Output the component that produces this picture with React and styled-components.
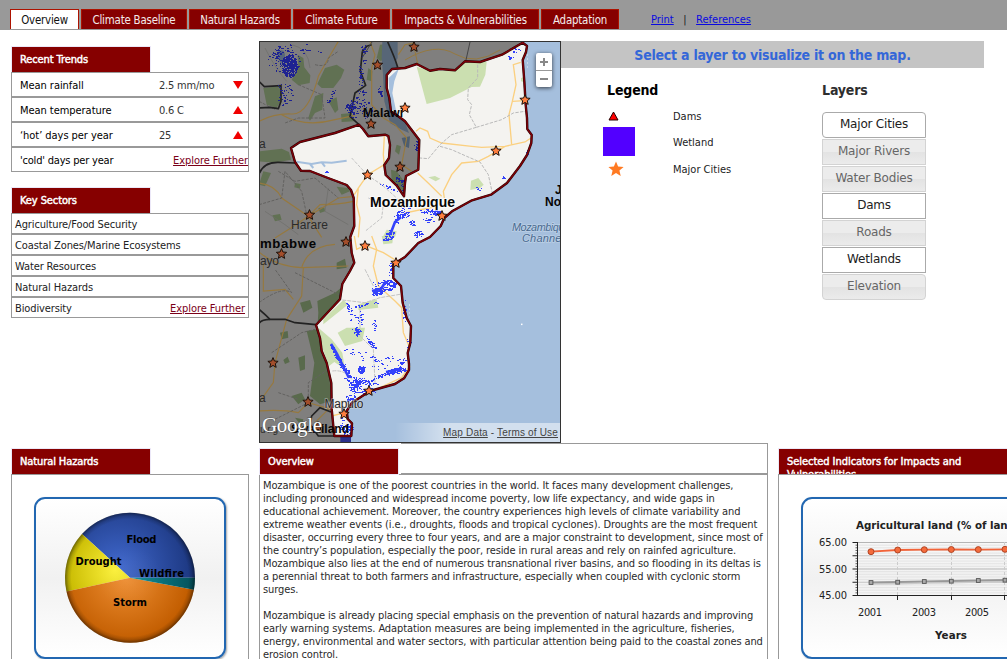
import React from 'react';
import styled, { createGlobalStyle } from 'styled-components';

const UI = '"DejaVu Sans Condensed", "DejaVu Sans", sans-serif';
const WIDE = '"DejaVu Sans", sans-serif';

const GlobalStyle = createGlobalStyle`
  * { box-sizing: border-box; }
  html, body { margin: 0; padding: 0; background: #fff; }
  body { font-family: ${UI}; font-stretch: condensed; font-size: 11px; color: #222; }
  svg { display: block; }
`;

const Page = styled.div`
  width: 1007px;
  height: 659px;
  overflow: hidden;
  background: #fff;
`;

const NavBar = styled.nav`
  display: flex;
  align-items: flex-end;
  gap: 2px;
  height: 30px;
  padding: 0 0 1px 10px;
  background: #999;
`;

const Tab = styled.a`
  display: flex;
  align-items: center;
  justify-content: center;
  width: ${(p) => p.$w}px;
  height: 20px;
  padding-top: 1px;
  border: 1px solid #ad1200;
  border-bottom: 0;
  background: ${(p) => (p.$active ? '#fff' : '#860000')};
  color: ${(p) => (p.$active ? '#111' : '#f4eaea')};
  font-size: 11.4px;
  letter-spacing: -0.2px;
  white-space: nowrap;
`;

const NavLinks = styled.div`
  display: flex;
  gap: 9.5px;
  margin-left: 30px;
  height: 20px;
  line-height: 21px;
  color: #222;
  a { color: #0a0ae0; text-decoration: underline; }
`;

const TopRow = styled.div`
  display: grid;
  grid-template-columns: 238px 312px 423px;
  height: 402px;
  margin: 11px 0 0 11px;
`;

const Sidebar = styled.div`
  padding-top: 6px;
`;

const MapColumn = styled.div`
  padding-left: 10px;
`;

const SidePanel = styled.section`
  min-width: 0;
`;

const PanelTitle = styled.h3`
  width: ${(p) => p.$w || 138}px;
  height: 25px;
  margin: 0 0 0 1px;
  padding: 6px 8px 0;
  overflow: hidden;
  background: #860000;
  box-shadow: 0 0 0 1px #ece8f8;
  color: #fff;
  font-size: 11px;
  font-weight: normal;
  line-height: 13px;
  letter-spacing: ${(p) => p.$ls ?? -0.1}px;
  -webkit-text-stroke: 0.45px #fff;
`;

const Rows = styled.div`
  position: relative;
  margin-bottom: ${(p) => p.$gap || 0}px;
  background: #fff;
`;

const Row = styled.div`
  display: flex;
  align-items: center;
  width: 238px;
  height: ${(p) => p.$h}px;
  padding: 2px ${(p) => p.$right || 0}px 0 ${(p) => p.$pad}px;
  border: 1px solid #999;
  color: ${(p) => p.$color || '#222'};
  white-space: nowrap;
  overflow: hidden;
  letter-spacing: ${(p) => p.$ls ?? -0.05}px;
`;

const RowLabel = styled.span`
  width: ${(p) => (p.$w ? p.$w + 'px' : 'auto')};
`;

const RowValue = styled.span`
  flex: 1;
  color: #333;
  letter-spacing: -0.2px;
`;

const Arrow = styled.span`
  width: 0;
  height: 0;
  margin: 0 5px 2px 0;
  border-left: 5.5px solid transparent;
  border-right: 5.5px solid transparent;
  border-top: ${(p) => (p.$down ? '8px solid #f00000' : '0')};
  border-bottom: ${(p) => (p.$down ? '0' : '8px solid #f00000')};
`;

const Explore = styled.a`
  margin-left: auto;
  color: #7b0018;
  text-decoration: underline;
  letter-spacing: -0.07px;
`;

const MapFrame = styled.div`
  position: relative;
  width: 302px;
  height: 402px;
  border: 1px solid #333;
  overflow: hidden;
`;

const ZoomControl = styled.div`
  position: absolute;
  top: 11px;
  left: 276px;
  width: 16px;
  border-radius: 2px;
  background: #fff;
  box-shadow: 0 1px 4px rgba(0, 0, 0, 0.7);
`;

const ZoomButton = styled.div`
  display: flex;
  align-items: center;
  justify-content: center;
  height: 17px;
  & + & { border-top: 1px solid #999; }
`;

const MapFooter = styled.div`
  position: absolute;
  right: 0;
  bottom: 0;
  width: 165px;
  height: 19px;
  padding-right: 2px;
  line-height: 20px;
  text-align: right;
  font-family: "Liberation Sans", sans-serif;
  font-size: 10px;
  letter-spacing: 0.17px;
  color: #444;
  background: linear-gradient(90deg, rgba(255, 255, 255, 0), rgba(255, 255, 255, 0.5) 50px);
  u { text-underline-offset: 1px; }
`;

const Banner = styled.div`
  height: 27px;
  line-height: 28px;
  text-align: center;
  background: #c4c4c4;
  color: #3467d8;
  font-size: 14px;
  font-weight: bold;
  letter-spacing: -0.24px;
  white-space: nowrap;
`;

const Controls = styled.div`
  display: grid;
  grid-template-columns: 219px 104px;
  padding: 12px 0 0 42px;
`;

const Heading = styled.h2`
  margin: 0 0 ${(p) => p.$mb}px ${(p) => p.$ml || 0}px;
  height: 20px;
  line-height: 20px;
  font-size: 14px;
  letter-spacing: -0.15px;
  color: ${(p) => p.$color};
`;

const LegendRow = styled.div`
  display: grid;
  grid-template-columns: 26px 1fr;
  column-gap: 44px;
  align-items: center;
  height: ${(p) => p.$h}px;
  span { padding-top: 2px; }
`;

const LegendIcon = styled.div`
  display: flex;
  justify-content: center;
  width: ${(p) => p.$w || 26}px;
`;

const Swatch = styled.div`
  flex: none;
  width: 32px;
  height: 29px;
  margin-left: 6px;
  background: #5200ff;
`;

const LayerButton = styled.button`
  display: block;
  width: 104px;
  height: 26px;
  margin: 0 0 1px;
  padding: 0 0 2px;
  border: 1px solid ${(p) => (p.$on ? '#aaa' : '#d3d3d3')};
  border-radius: ${(p) => p.$radius || '0'};
  background: ${(p) => (p.$on ? '#fff' : 'linear-gradient(#ececec 48%, #e3e3e3 52%, #ebebeb)')};
  color: ${(p) => (p.$on ? '#212121' : '#666')};
  font-family: ${WIDE};
  font-stretch: normal;
  font-size: 12px;
  letter-spacing: -0.2px;
`;

const BottomRow = styled.div`
  display: grid;
  grid-template-columns: 238px 509px 300px;
  column-gap: 10px;
  margin-left: 11px;
`;

const Panel = styled.section`
  padding-top: 6px;
`;

const ChartBox = styled.div`
  height: 230px;
  padding: 22px 22px 0;
  border: 1px solid #999;
`;

const ChartCard = styled.div`
  width: ${(p) => p.$w}px;
  height: 162px;
  border: 2px solid #2267b1;
  border-radius: 11px;
  overflow: hidden;
  background: linear-gradient(#fff, #f1f1f1 50%, #fff);
  box-shadow: 1px 1px 2px rgba(0, 0, 0, 0.35);
`;

const ChartLabels = styled.g`
  font-family: ${WIDE};
  font-stretch: normal;
  font-weight: bold;
  font-size: ${(p) => p.$size}px;
  fill: ${(p) => p.$color};
`;

const OverviewHead = styled.div`
  display: grid;
  grid-template-columns: 142px 1fr;
  height: 31px;
`;

const OverviewTitle = styled.div`
  padding-top: 6px;
`;

const EmptyCell = styled.div`
  border: 1px solid #999;
  border-left: 0;
`;

const OverviewText = styled.div`
  height: 230px;
  padding: 4px 0 0 3px;
  border: 1px solid #999;
  color: #2a2a2a;
`;

const Paragraph = styled.p`
  margin: 0 0 13px;
`;

const Line = styled.span`
  display: block;
  height: 13px;
  line-height: 13px;
  white-space: nowrap;
  letter-spacing: -0.11px;
`;

const scatter = (clusters) => {
  let seed = 7;
  const rnd = () => {
    seed = (seed * 16807) % 2147483647;
    return seed / 2147483647;
  };
  let d = '';
  clusters.forEach(([cx, cy, rx, ry, n, deg = 0]) => {
    const a = (deg * Math.PI) / 180;
    for (let i = 0; i < n * 1.35; i += 1) {
      const t = rnd() * Math.PI * 2;
      const r = Math.pow(rnd(), 0.7);
      const u = Math.cos(t) * r * rx;
      const v = Math.sin(t) * r * ry;
      const x = Math.round(cx + u * Math.cos(a) - v * Math.sin(a));
      const y = Math.round(cy + u * Math.sin(a) + v * Math.cos(a));
      const w = rnd() > 0.6 ? 2 : 1;
      d += `M${x} ${y}h${w}v1h${-w}z`;
    }
  });
  return d;
};

const DARK_WET = scatter([
  [289, 66, 8, 11, 260], [284, 60, 16, 16, 60], [300, 50, 26, 8, 16], [283, 94, 9, 13, 30],
  [277, 53, 6, 8, 20], [331, 96, 2, 9, 12, 25], [363, 54, 3, 11, 14], [360, 77, 3, 11, 18],
  [359, 108, 14, 12, 55], [350, 107, 5, 4, 30], [362, 92, 5, 4, 10], [380, 92, 3, 6, 12],
  [416, 146, 2, 7, 10], [398, 179, 3, 5, 14], [402, 185, 2, 6, 10],
]);

const LIGHT_WET = scatter([
  [515, 50, 5, 3, 8], [511, 57, 4, 3, 6], [527, 152, 1, 3, 4], [503, 177, 2, 3, 4],
  [402, 214, 7, 4, 50], [396, 220, 3, 6, 14], [389, 235, 4, 6, 26, 35], [412, 223, 4, 3, 20], [418, 234, 5, 3, 22],
  [388, 187, 10, 1.5, 14, 20], [429, 211, 10, 3, 26], [437, 213, 4, 3, 24], [428, 220, 6, 3, 12],
  [404, 206, 6, 5, 12, 50], [478, 189, 5, 2, 4], [386, 239, 4, 2, 12],
  [379, 291, 8, 3.5, 90, -28], [386, 282, 6, 3, 34], [376, 285, 5, 5, 8], [391, 286, 3, 6, 26, 50],
  [390, 270, 2, 7, 10], [366, 304, 14, 1.5, 16, -12], [349, 309, 2, 7, 14, -20], [360, 318, 3, 8, 12],
  [357, 332, 3, 4.5, 34], [353, 324, 4, 10, 6], [371, 343, 2, 9, 26, -35], [374, 325, 2, 8, 10],
  [337, 357, 2, 15, 60, -28], [345, 369, 3, 9, 30, -35], [352, 352, 9, 3, 8, 15], [361, 369, 3.5, 4.5, 60],
  [361, 381, 18, 4, 60, 8], [355, 386, 7, 7, 70], [368, 391, 8, 3, 24], [351, 398, 6, 4, 24],
  [388, 373, 18, 2, 60, -18], [397, 370, 9, 3, 70, -8], [402, 362, 7, 1.5, 12, -45], [393, 358, 9, 3, 5],
  [374, 360, 16, 8, 12, 18], [404, 311, 2, 12, 14], [408, 343, 2, 7, 7], [382, 363, 12, 8, 8],
  [347, 429, 5, 7, 40], [342, 425, 2, 8, 12], [326, 172, 2, 1, 3],
]);

const MOZ =
  'M522.7 42.7L527 46L526 52L522.7 60L524.3 81L525.7 105L527 118L527.3 129L531.7 135L531.3 143L527 155L520 166L507 183L491 194.7L472 200.3L452 211.3L444.3 218L440.7 226L430 237L418.3 243L405 257L393.3 264.3L393.3 278L401 286L402.7 303L406.7 318L411 326L410.3 343L407.7 353L409 364L409 370L404 378.3L395 384L370 391L352 402.7L346.7 411L347.7 419L352 423.3L351.3 436L334.3 436L331.7 409L331.3 383L326.7 363L321.7 351L320 338L316 325L340 299.3L342.3 284L350 271L354.3 262.7L351.7 253L350.3 237L354.3 226L353.7 198L351 190L346.7 185L328 178L310 171L301 170.7L295 162L291 148L300 142L335 133L359 124.7L363 129L368.3 136.3L385 134.7L388.3 136L390 145L389 158L384.3 165L385.7 175L397 186L404 196.3L405 183L406 176L418.3 169.7L419.3 140L405 121.3L401.7 118.7L391 111.3L389.3 98L386.7 88L386.7 75L392 69L405 68L416.7 64L430 70.7L440 69L455 70.3L465 61.3L480 62L502 54.7Z';

const star = (cx, cy, r) =>
  Array.from({ length: 10 }, (_, i) => {
    const a = (Math.PI / 5) * i - Math.PI / 2;
    const k = i % 2 ? r * 0.45 : r;
    return `${(cx + Math.cos(a) * k).toFixed(2)},${(cy + Math.sin(a) * k).toFixed(2)}`;
  }).join(' ');

const CITIES = [
  [414, 47, 1], [377.5, 65, 1], [405, 108, 0], [371, 124, 1], [525, 100, 0], [496, 151, 0], [400, 167, 1],
  [367.5, 175, 0], [309.5, 215, 1], [442, 216, 0], [346, 242, 1], [365, 246, 0], [281.5, 254, 1],
  [396, 263, 0], [273, 363, 1], [308, 402, 1], [369, 391, 0], [344, 414, 0], [318, 427, 1],
];

const A = '"Liberation Sans", sans-serif';

const CountryMap = () => (
  <svg width="300" height="400" viewBox="260 42 300 400">
    <rect x="260" y="42" width="300" height="400" fill="#a5bfdd" />
    <path d="M260 42H523L440 95L425 190L380 262L380 350L345 412L350 425L351 442H260Z" fill="#807f7e" />

    <g transform="translate(255 38) scale(.33333)">
      <g fill="#617153">
        <path d="M128 50L145 60L148 88L166 112L164 135L130 142L110 125L130 85Z" />
        <path d="M25 150L75 145L80 185L65 210L35 200Z" />
        <path d="M210 90L245 80L268 95L258 120L235 150L200 150L187 138Z" />
        <path d="M180 175L205 165L202 215L180 225L165 248L160 240Z" />
        <path d="M220 190L245 178L250 215L240 225Z" />
        <path d="M258 228L290 225L298 250L260 252Z" />
        <path d="M12 340L80 332L102 342L108 365L60 374L12 370Z" />
        <path d="M25 400L48 405L30 445L12 440Z" />
        <path d="M120 435L137 438L135 452L118 448Z" />
        <path d="M245 446L278 450L285 460L260 470Z" />
        <path d="M340 90L352 100L350 130L335 125Z" />
        <path d="M375 20L398 18L395 50L378 70L365 60Z" />
        <path d="M425 320L438 325L432 350L420 340Z" />
        <path d="M408 395L425 400L455 440L445 460L410 430Z" />
        <path d="M52 532L75 528L80 545L60 550Z" />
        <path d="M190 510L208 508L210 520L195 525Z" />
      </g>
      <path d="M382 12H428V60L422 72L428 90L404 110L399 150L405 190L412 222L448 248L462 285L440 275L405 255L388 190L384 110L380 60Z" fill="#576677" />
      <path d="M440 300L465 295L462 330L448 325Z" fill="#4c5d70" />
      <path d="M70 40Q90 30 90 55L78 78Q66 60 70 40Z" fill="#56667b" />
      <g fill="none" stroke="#96793f" strokeWidth="3.5">
        <path d="M12 250Q60 225 110 228T190 115L215 70L250 10" />
        <path d="M80 230Q150 270 240 245L300 232" />
        <path d="M12 435Q60 440 80 480L160 535L250 480L298 475" />
        <path d="M60 600Q110 570 160 535L195 500Q250 500 295 490M160 535L200 598" />
        <path d="M345 12L360 50L350 90L350 200L385 240L420 260L455 300L440 380L470 400" />
        <path d="M430 50L450 20L475 15" />
      </g>
      <g fill="none" stroke="#62615f" strokeWidth="3" strokeDasharray="9 4">
        <path d="M180 80Q220 90 220 60L250 40M130 140L200 170L210 240L130 240L90 255M12 190L60 215" />
        <path d="M12 500L80 480L90 400L140 460L155 530M70 400L120 430L180 420L250 480" />
      </g>
      <g fill="none" stroke="#6c6c6a" strokeWidth="2">
        <path d="M30 30Q60 90 95 130M110 20Q160 30 165 90M180 360L170 400M220 450L210 520L280 560M30 520L90 560L130 590" />
      </g>
      <g fill="none" stroke="#222" strokeWidth="5" strokeLinejoin="round">
        <path d="M12 130L28 146L78 143L78 190L70 212L45 208L12 210" />
        <path d="M12 408Q25 372 70 373L122 375" />
        <path d="M322 40L316 100L332 142L300 165L285 235L312 260" />
        <path d="M322 40L335 25L350 20M398 12Q420 60 428 88" />
      </g>
    </g>

    <g transform="translate(255 236) scale(.33333)">
      <g fill="#596a4c">
        <path d="M187 195L240 170L265 150L258 190L188 262L190 230Z" />
        <path d="M135 200L165 192L172 215L145 230Z" />
        <path d="M155 285L190 280L200 345L222 400L228 495L195 505L165 480L178 380Z" />
        <path d="M75 290L98 285L100 305L80 310ZM85 372L98 362L104 378L90 384ZM130 365L150 358L150 400L135 405Z" />
        <path d="M110 480L140 470L150 490L130 505ZM120 545L145 550L140 570ZM245 80L270 68L275 95L245 100Z" />
      </g>
      <g fill="none" stroke="#96793f" strokeWidth="3.5">
        <path d="M15 50Q60 90 140 95L280 90M140 95Q160 30 240 25M145 95L140 180L95 250L60 380L55 440L12 500M25 80V165L90 160L115 190" />
        <path d="M12 525Q80 520 130 530L160 500L230 520M180 560L240 500" />
      </g>
      <g fill="none" stroke="#62615f" strokeWidth="3" strokeDasharray="9 4">
        <path d="M12 200Q80 150 110 170L60 100M120 110L260 180M50 350L140 290L180 280M60 550L160 500L160 440L220 400M70 470L130 490" />
      </g>
      <g fill="none" stroke="#222" strokeWidth="5" strokeLinejoin="round">
        <path d="M12 220Q30 235 45 250L90 250L120 260L183 266" />
        <path d="M12 262Q20 250 45 250" />
        <path d="M228 528L195 515L170 540L165 565L190 600L240 600" />
      </g>
      <path d="M256 600L288 600V618H256Z" fill="#2a2f8c" />
    </g>
    <path d="M405 60Q435 42 455 54T500 50M414 47L418 65" stroke="#96793f" fill="none" />
    <path d="M470 42L466 60M372 42L362 58" stroke="#444" fill="none" />
    <path d={DARK_WET} fill="#1e2292" />

    <path d={MOZ} fill="#f4f3f0" />

    <g transform="translate(405 38) scale(.33333)">
      <g fill="#cbdfb0">
        <path d="M35 86L78 99L150 98L182 72H245L241 110L225 146L200 147L135 180L65 198L60 180Z" />
        <path d="M198 428L220 420L236 440L225 450L196 456ZM70 418L90 414L106 422L92 430ZM348 120L357 117V132L348 130Z" />
      </g>
      <g fill="none" stroke="#fbd080" strokeWidth="4">
        <path d="M347 73L325 80L333 140L322 190L312 230L320 320" />
        <path d="M322 190L358 188M33 280L45 270L68 280L75 300L110 315L200 325L230 328L300 325L360 312L378 300" />
        <path d="M300 325L250 355L220 370L170 375L140 410L115 460L118 480M38 405L75 440L110 475M95 505L0 525" />
      </g>
      <g fill="none" stroke="#b9b9b9" strokeWidth="3" strokeDasharray="10 4">
        <path d="M218 80V120L190 150L188 185L200 200L193 230L214 268L140 290L105 320L70 362L45 360" />
        <path d="M214 268L290 245L325 225L360 220M105 325L140 335L185 355L225 372L250 410L262 465" />
      </g>
    </g>
    <g transform="translate(255 38) scale(.33333)">
      <path d="M401 120L432 91L418 130L412 165L424 222L410 215L404 190Z" fill="#a5bfdd" />
      <path d="M124 371L170 378L200 373L230 374L275 368M165 378L175 390M200 373L210 386" fill="none" stroke="#a5bfdd" strokeWidth="6" />
      <path d="M383 598L395 575L425 580L420 598Z" fill="#cbdfb0" />
      <g fill="none" stroke="#fbd080" strokeWidth="4">
        <path d="M388 295L385 350L388 380L338 410L310 450L305 500L315 540L310 598M310 450L298 470" />
      </g>
      <g fill="none" stroke="#c3c3c3" strokeWidth="3" strokeDasharray="10 4">
        <path d="M290 360L338 412L380 440L425 480L440 510M340 480L385 500L380 540L330 580" />
      </g>
    </g>
    <g transform="translate(255 236) scale(.33333)">
      <g fill="#cbdfb0">
        <path d="M205 250L265 192L280 205L205 265ZM310 205L365 190L370 215L310 222Z" />
        <path d="M248 290L275 275L330 275L322 315L270 330ZM190 275L230 310L262 350L270 400L238 378L222 390L200 330Z" />
        <path d="M380 0H415L412 22L385 25Z" />
      </g>
      <g fill="none" stroke="#fbd080" strokeWidth="4">
        <path d="M298 0L305 40L330 28L385 50L418 70M350 0L365 40L355 90L370 150L420 195L440 215L445 290L462 330M375 455L440 425L465 390M270 530L230 540" />
      </g>
      <g fill="none" stroke="#c3c3c3" strokeWidth="3" strokeDasharray="12 3">
        <path d="M262 192L330 200L375 185L435 175M315 220V300L355 340L360 440M330 100L355 150M232 405Q270 400 290 430" />
      </g>
    </g>
    <path d={LIGHT_WET} fill="#3442fb" />
    <path d="M401 217L395 222L390 235M331 344L337 354L345 370L349 378M372 291L381 289L386 281M386 372L402 369" stroke="#3442fb" strokeWidth="2.6" fill="none" />
    <path d={MOZ} fill="none" stroke="#240505" strokeWidth="2.4" strokeLinejoin="round" />
    <path d={MOZ} fill="none" stroke="#7d0008" strokeWidth="1.5" strokeLinejoin="round" />
    <rect x="521" y="323.6" width="1.5" height="1.5" fill="#fff" />
    <path d="M527.5 54v16M409.5 304v14" stroke="#c7d6e6" strokeDasharray="2 2" />

    <g fontFamily={A}>
      <g fontSize="12" fill="#2b2b2b">
        <text x="291" y="229" textLength="37">Harare</text>
        <text x="260" y="265" textLength="19">ayo</text>
        <text x="259" y="148">a</text>
        <text x="259" y="402">a</text>
        <text x="260" y="433" fontSize="10" textLength="18">urg</text>
        <text x="324.5" y="408" textLength="39" stroke="#ddd" strokeWidth="1.5" paintOrder="stroke" strokeOpacity=".5">Maputo</text>
      </g>
      <g fontWeight="bold" fill="#050505">
        <text x="363" y="117" fontSize="12" textLength="40">Malawi</text>
        <text x="260" y="248" fontSize="13.2" textLength="56">mbabwe</text>
        <text x="370" y="207" fontSize="14" textLength="85" stroke="#fff" strokeWidth="2" paintOrder="stroke" strokeOpacity=".7">Mozambique</text>
        <text x="291" y="433" fontSize="12" textLength="58">Swaziland</text>
        <text x="555" y="194" fontSize="12">J</text>
        <text x="545" y="206" fontSize="12">No</text>
      </g>
      <g fontStyle="italic" fontSize="11" fill="#48698f" stroke="#bcd0e6" strokeWidth="1.5" paintOrder="stroke">
        <text x="512" y="231" textLength="58">Mozambique</text>
        <text x="522" y="242" textLength="42">Channel</text>
      </g>
    </g>
    {CITIES.map(([x, y, dim]) => (
      <polygon key={`${x}-${y}`} points={star(x, y, 5.4)} fill={dim ? '#a34e2b' : '#ff7f3f'} stroke="#1b1009" strokeWidth="1" />
    ))}
    <text x="262" y="432" fontFamily='"Liberation Serif", serif' fontSize="21" textLength="60" fill="#fff" stroke="#555" strokeWidth="1" paintOrder="stroke">Google</text>
  </svg>
);

const PieChart = () => (
  <svg width="188" height="158" viewBox="36 499 188 158">
    <defs>
      <radialGradient id="pieShade" gradientUnits="userSpaceOnUse" cx="130" cy="577.7" r="65">
        <stop offset="0" stopColor="#fff" stopOpacity=".05" />
        <stop offset=".5" stopColor="#fff" stopOpacity="0" />
        <stop offset=".9" stopColor="#000" stopOpacity="0" />
        <stop offset=".95" stopColor="#000" stopOpacity=".15" />
        <stop offset="1" stopColor="#000" stopOpacity=".45" />
      </radialGradient>
      <radialGradient id="flood" gradientUnits="userSpaceOnUse" cx="118" cy="568" r="75">
        <stop offset="0" stopColor="#4068cd" />
        <stop offset="1" stopColor="#1c3780" />
      </radialGradient>
      <radialGradient id="storm" gradientUnits="userSpaceOnUse" cx="125" cy="577" r="65">
        <stop offset="0" stopColor="#ee8e32" />
        <stop offset="1" stopColor="#c25d00" />
      </radialGradient>
      <radialGradient id="drought" gradientUnits="userSpaceOnUse" cx="115" cy="570" r="50">
        <stop offset="0" stopColor="#fbf03a" />
        <stop offset="1" stopColor="#c7b900" />
      </radialGradient>
      <linearGradient id="wildfire" x1="0" x2="1">
        <stop offset="0" stopColor="#0d8f98" />
        <stop offset="1" stopColor="#04505a" />
      </linearGradient>
    </defs>
    <path d="M130 577.7L195 577.7A65 65 0 0 0 82 534Z" fill="url(#flood)" />
    <path d="M130 577.7L82 534A65 65 0 0 0 66.5 591.5Z" fill="url(#drought)" />
    <path d="M130 577.7L66.5 591.5A65 65 0 0 0 193.9 589.8Z" fill="url(#storm)" />
    <path d="M130 577.7L193.9 589.8A65 65 0 0 0 195 577.7Z" fill="url(#wildfire)" />
    <circle cx="130" cy="577.7" r="65" fill="url(#pieShade)" />
    <ChartLabels $size={10} $color="#000">
      <text x="126.5" y="543" textLength="30">Flood</text>
      <text x="75.5" y="565" textLength="46">Drought</text>
      <text x="139" y="577" textLength="45">Wildfire</text>
      <text x="113" y="606" textLength="34">Storm</text>
    </ChartLabels>
  </svg>
);

const YEARS = [871, 897.7, 924.3, 951.3, 978.3, 1005, 1032];
const LAND = [551.7, 550, 549.7, 549.5, 549.6, 549.3, 549];
const BASE = [582.3, 582, 581.3, 581, 580.3, 580, 580];
const GRID = Array.from({ length: 21 }, (_, i) => 542.5 + i * 2.65);

const LineChart = () => (
  <svg width="236" height="158" viewBox="803 499 236 158">
    {GRID.map((y, i) => (
      <path key={y} d={`M858 ${y}H1039`} stroke={i % 10 === 0 ? '#b5b5b5' : i % 5 === 0 ? '#c4c4c4' : '#e4e4e4'} />
    ))}
    {[897.5, 951.5, 1004.5].map((x) => (
      <g key={x}>
        <path d={`M${x} 542V595`} stroke="#ccc" strokeDasharray="3 2" />
        <path d={`M${x} 595V600`} stroke="#222" />
      </g>
    ))}
    {GRID.map((y, i) => (
      <path key={y} d={`M${i % 5 === 0 ? 852.5 : 855.5} ${y}H858`} stroke="#222" strokeWidth={i % 5 === 0 ? 1 : 0.7} />
    ))}
    <path d="M857.5 542V595.5H1039" fill="none" stroke="#222" />
    <polyline points={YEARS.map((x, i) => `${x},${BASE[i] + 1.5}`).join(' ')} fill="none" stroke="#ccc" strokeWidth="2" />
    <polyline points={YEARS.map((x, i) => `${x},${BASE[i]}`).join(' ')} fill="none" stroke="#999" strokeWidth="1.8" />
    <polyline points={YEARS.map((x, i) => `${x},${LAND[i]}`).join(' ')} fill="none" stroke="#f2643a" strokeWidth="1.8" />
    {YEARS.map((x, i) => (
      <g key={x}>
        <rect x={x - 1.9} y={BASE[i] - 1.7} width="3.8" height="3.8" fill="#aaa" stroke="#555" strokeWidth=".9" />
        <circle cx={x} cy={LAND[i]} r="3" fill="#f46b3c" stroke="#a83c1c" strokeWidth=".9" />
      </g>
    ))}
    <g fontFamily={UI} fontSize="11" fill="#222">
      <text x="819" y="546" textLength="28">65.00</text>
      <text x="819" y="573" textLength="28">55.00</text>
      <text x="819" y="599" textLength="28">45.00</text>
      <text x="858" y="616" textLength="24">2001</text>
      <text x="912" y="616" textLength="24">2003</text>
      <text x="965" y="616" textLength="24">2005</text>
    </g>
    <ChartLabels $size={10.3} $color="#222">
      <text x="856" y="529" textLength="193">Agricultural land (% of land area)</text>
      <text x="935" y="639" textLength="32">Years</text>
    </ChartLabels>
  </svg>
);

const TABS = [
  ['Overview', 69], ['Climate Baseline', 106], ['Natural Hazards', 102], ['Climate Future', 97],
  ['Impacts & Vulnerabilities', 147], ['Adaptation', 78],
];
const TRENDS = [
  ['Mean rainfall', '2.5 mm/mo', 'down'], ['Mean temperature', '0.6 C', 'up'], ['‘hot’ days per year', '25', 'up'],
];
const SECTORS = ['Agriculture/Food Security', 'Coastal Zones/Marine Ecosystems', 'Water Resources', 'Natural Hazards'];
const LAYERS = [
  ['Major Cities', 1], ['Major Rivers', 0], ['Water Bodies', 0], ['Dams', 1], ['Roads', 0], ['Wetlands', 1], ['Elevation', 0],
];
const PARAGRAPHS = [
  [
    'Mozambique is one of the poorest countries in the world. It faces many development challenges,',
    'including pronounced and widespread income poverty, low life expectancy, and wide gaps in',
    'educational achievement. Moreover, the country experiences high levels of climate variability and',
    'extreme weather events (i.e., droughts, floods and tropical cyclones). Droughts are the most frequent',
    'disaster, occurring every three to four years, and are a major constraint to development, since most of',
    'the country’s population, especially the poor, reside in rural areas and rely on rainfed agriculture.',
    'Mozambique also lies at the end of numerous transnational river basins, and so flooding in its deltas is',
    'a perennial threat to both farmers and infrastructure, especially when coupled with cyclonic storm',
    'surges.',
  ],
  [
    'Mozambique is already placing special emphasis on the prevention of natural hazards and improving',
    'early warning systems. Adaptation measures are being implemented in the agriculture, fisheries,',
    'energy, environmental and water sectors, with particular attention being paid to the coastal zones and',
    'erosion control.',
  ],
];

export default function App() {
  return (
    <Page>
      <GlobalStyle />
      <NavBar>
        {TABS.map(([label, w], i) => (
          <Tab key={label} $w={w} $active={i === 0}>{label}</Tab>
        ))}
        <NavLinks><a>Print</a><span>|</span><a>References</a></NavLinks>
      </NavBar>

      <TopRow>
        <Sidebar>
          <PanelTitle>Recent Trends</PanelTitle>
          <Rows $gap={16}>
            {TRENDS.map(([label, value, dir]) => (
              <Row key={label} $h={25} $pad={8} $color="#000">
                <RowLabel $w={139}>{label}</RowLabel>
                <RowValue>{value}</RowValue>
                <Arrow $down={dir === 'down'} />
              </Row>
            ))}
            <Row $h={25} $pad={8} $color="#000" $ls={-0.2}>
              <RowLabel>'cold' days per year</RowLabel>
              <Explore>Explore Further</Explore>
            </Row>
          </Rows>
          <PanelTitle>Key Sectors</PanelTitle>
          <Rows>
            {SECTORS.map((s) => <Row key={s} $h={21} $pad={3} $ls={-0.12}>{s}</Row>)}
            <Row $h={21} $pad={3} $right={3} $ls={-0.12}>
              <RowLabel>Biodiversity</RowLabel>
              <Explore>Explore Further</Explore>
            </Row>
          </Rows>
        </Sidebar>

        <MapColumn>
          <MapFrame>
            <CountryMap />
            <ZoomControl>
              <ZoomButton>
                <svg width="8" height="8"><path d="M4 0V8M0 4H8" stroke="#888" strokeWidth="2" /></svg>
              </ZoomButton>
              <ZoomButton>
                <svg width="8" height="8"><path d="M0 4H8" stroke="#888" strokeWidth="2" /></svg>
              </ZoomButton>
            </ZoomControl>
            <MapFooter><u>Map Data</u> - <u>Terms of Use</u></MapFooter>
          </MapFrame>
        </MapColumn>

        <SidePanel>
          <Banner>Select a layer to visualize it on the map.</Banner>
          <Controls>
            <div>
              <Heading $color="#000" $ml={4} $mb={4}>Legend</Heading>
              <LegendRow $h={23}>
                <LegendIcon $w={21}>
                  <svg width="11" height="10"><path d="M5.5 1L10 9H1Z" fill="#f00" stroke="#200" /></svg>
                </LegendIcon>
                <span>Dams</span>
              </LegendRow>
              <LegendRow $h={29}>
                <LegendIcon><Swatch /></LegendIcon>
                <span>Wetland</span>
              </LegendRow>
              <LegendRow $h={25}>
                <LegendIcon>
                  <svg width="16" height="16"><polygon points={star(8, 8.5, 8)} fill="#ff7a22" /></svg>
                </LegendIcon>
                <span>Major Cities</span>
              </LegendRow>
            </div>
            <div>
              <Heading $color="#2e2e2e" $mb={12}>Layers</Heading>
              {LAYERS.map(([label, on], i) => (
                <LayerButton key={label} $on={on} $radius={i === 0 ? '4px 4px 0 4px' : i === 6 ? '0 4px 4px 4px' : '0'}>
                  {label}
                </LayerButton>
              ))}
            </div>
          </Controls>
        </SidePanel>
      </TopRow>

      <BottomRow>
        <Panel>
          <PanelTitle>Natural Hazards</PanelTitle>
          <ChartBox><ChartCard $w={192}><PieChart /></ChartCard></ChartBox>
        </Panel>
        <section>
          <OverviewHead>
            <OverviewTitle><PanelTitle>Overview</PanelTitle></OverviewTitle>
            <EmptyCell />
          </OverviewHead>
          <OverviewText>
            {PARAGRAPHS.map((lines) => (
              <Paragraph key={lines[0]}>
                {lines.map((l) => <Line key={l}>{l}</Line>)}
              </Paragraph>
            ))}
          </OverviewText>
        </section>
        <Panel>
          <PanelTitle $w={238} $ls={-0.05}>Selected Indicators for Impacts and Vulnerabilities</PanelTitle>
          <ChartBox><ChartCard $w={240}><LineChart /></ChartCard></ChartBox>
        </Panel>
      </BottomRow>
    </Page>
  );
}
